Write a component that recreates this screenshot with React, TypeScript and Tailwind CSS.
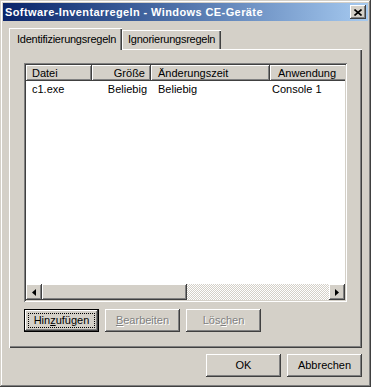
import type { ReactNode } from 'react'

const raised =
  'shadow-[inset_-1px_-1px_#404040,inset_1px_1px_#fff,inset_-2px_-2px_#808080,inset_2px_2px_#d4d0c8]'
const sunken =
  'shadow-[inset_1px_1px_#808080,inset_-1px_-1px_#fff,inset_2px_2px_#404040,inset_-2px_-2px_#d4d0c8]'

const COLUMNS = [
  { label: 'Datei', width: 'w-[66px]', head: 'pl-[6px]', cell: 'pl-[6px]' },
  { label: 'Größe', width: 'w-[59px]', head: 'justify-end pr-[6px]', cell: 'justify-end pr-[4px]' },
  { label: 'Änderungszeit', width: 'w-[119px]', head: 'pl-[7px]', cell: 'pl-[7px]' },
  { label: 'Anwendung', width: 'w-[100px]', head: 'pl-[8px]', cell: 'pl-[2px]' },
]

const ROWS = [['c1.exe', 'Beliebig', 'Beliebig', 'Console 1']]

function Arrow({ dir }: { dir: 'left' | 'right' }) {
  return (
    <div className={`w-[16px] h-[16px] shrink-0 bg-[#d4d0c8] flex items-center justify-center ${raised}`}>
      <svg width="4" height="7" viewBox="0 0 4 7">
        {dir === 'left' ? <path d="M4 0V7L0 3.5Z" fill="#000" /> : <path d="M0 0V7L4 3.5Z" fill="#000" />}
      </svg>
    </div>
  )
}

function Button({ children, isDefault, disabled }: { children: ReactNode; isDefault?: boolean; disabled?: boolean }) {
  return (
    <div
      className={[
        'relative w-[75px] h-[23px] bg-[#d4d0c8] flex items-center justify-center',
        isDefault
          ? 'shadow-[inset_0_0_0_1px_#000,inset_-2px_-2px_#404040,inset_2px_2px_#fff,inset_-3px_-3px_#808080]'
          : raised,
        disabled ? 'text-[#808080] [text-shadow:1px_1px_#fff]' : 'text-black',
      ].join(' ')}
    >
      {isDefault && <div className="absolute inset-[4px] border border-dotted border-black" />}
      <span className="relative">{children}</span>
    </div>
  )
}

export default function App() {
  return (
    <div className="w-[371px] h-[387px] bg-[#d4d0c8] p-[3px] flex flex-col font-['Liberation_Sans',Arial,sans-serif] text-[11px] leading-none text-black shadow-[inset_-1px_-1px_#404040,inset_1px_1px_#d4d0c8,inset_-2px_-2px_#808080,inset_2px_2px_#fff]">
      {/* title bar */}
      <div className="h-[18px] shrink-0 flex items-center bg-gradient-to-r from-[#0a246a] to-[#a6caf0]">
        <span className="flex-1 pl-[2px] font-bold tracking-[0.4px] text-white whitespace-nowrap">
          Software-Inventarregeln - Windows CE-Geräte
        </span>
        <div className={`w-[16px] h-[14px] mr-[2px] bg-[#d4d0c8] flex items-center justify-center ${raised}`}>
          <svg width="8" height="7" viewBox="0 0 8 7">
            <path d="M0.5 0.5L7.5 6.5M7.5 0.5L0.5 6.5" stroke="#000" strokeWidth="1.6" />
          </svg>
        </div>
      </div>

      <div className="flex-1 flex flex-col px-[6px] pt-[7px]">
        {/* tabs */}
        <div className="h-[21px] flex items-end shrink-0 tracking-[-0.25px]">
          <div className="relative z-10 w-[113px] h-[22px] -mb-px bg-[#d4d0c8] pl-[8px] flex items-center whitespace-nowrap shadow-[inset_1px_1px_#fff,inset_-1px_0_#404040,inset_-2px_0_#808080]">
            Identifizierungsregeln
          </div>
          <div className="w-[99px] h-[19px] bg-[#d4d0c8] pl-[6px] flex items-center whitespace-nowrap shadow-[inset_1px_1px_#fff,inset_-1px_0_#404040,inset_-2px_0_#808080]">
            Ignorierungsregeln
          </div>
        </div>

        {/* panel */}
        <div className="h-[299px] shrink-0 flex flex-col px-[15px] pt-[14px] shadow-[inset_1px_1px_#fff,inset_-1px_-1px_#404040,inset_-2px_-2px_#808080]">
          <div className={`h-[239px] bg-white p-[2px] flex flex-col ${sunken}`}>
            <div className="h-[16px] flex overflow-hidden shrink-0">
              {COLUMNS.map(c => (
                <div
                  key={c.label}
                  className={`${c.width} shrink-0 h-full flex items-center bg-[#d4d0c8] ${c.head} shadow-[inset_-1px_-1px_#404040,inset_1px_1px_#fff,inset_-2px_-2px_#808080]`}
                >
                  {c.label}
                </div>
              ))}
            </div>
            {ROWS.map((row, i) => (
              <div key={i} className="h-[16px] flex overflow-hidden">
                {row.map((cell, j) => (
                  <div key={j} className={`${COLUMNS[j].width} shrink-0 flex items-center ${COLUMNS[j].cell}`}>
                    {cell}
                  </div>
                ))}
              </div>
            ))}
            <div className="flex-1" />
            <div className="h-[16px] flex shrink-0">
              <Arrow dir="left" />
              <div className={`w-[145px] h-full bg-[#d4d0c8] ${raised}`} />
              <div className="flex-1 h-full bg-[conic-gradient(#fff_25%,#d4d0c8_0_50%,#fff_0_75%,#d4d0c8_0)] bg-[length:2px_2px]" />
              <Arrow dir="right" />
            </div>
          </div>

          <div className="flex gap-[6px] mt-[7px]">
            <Button isDefault>
              Hin<u>z</u>ufügen
            </Button>
            <Button disabled>
              <u>B</u>earbeiten
            </Button>
            <Button disabled>
              Lös<u>c</u>hen
            </Button>
          </div>
        </div>

        <div className="flex justify-end gap-[6px] mt-[6px]">
          <Button>OK</Button>
          <Button>Abbrechen</Button>
        </div>
      </div>
    </div>
  )
}
